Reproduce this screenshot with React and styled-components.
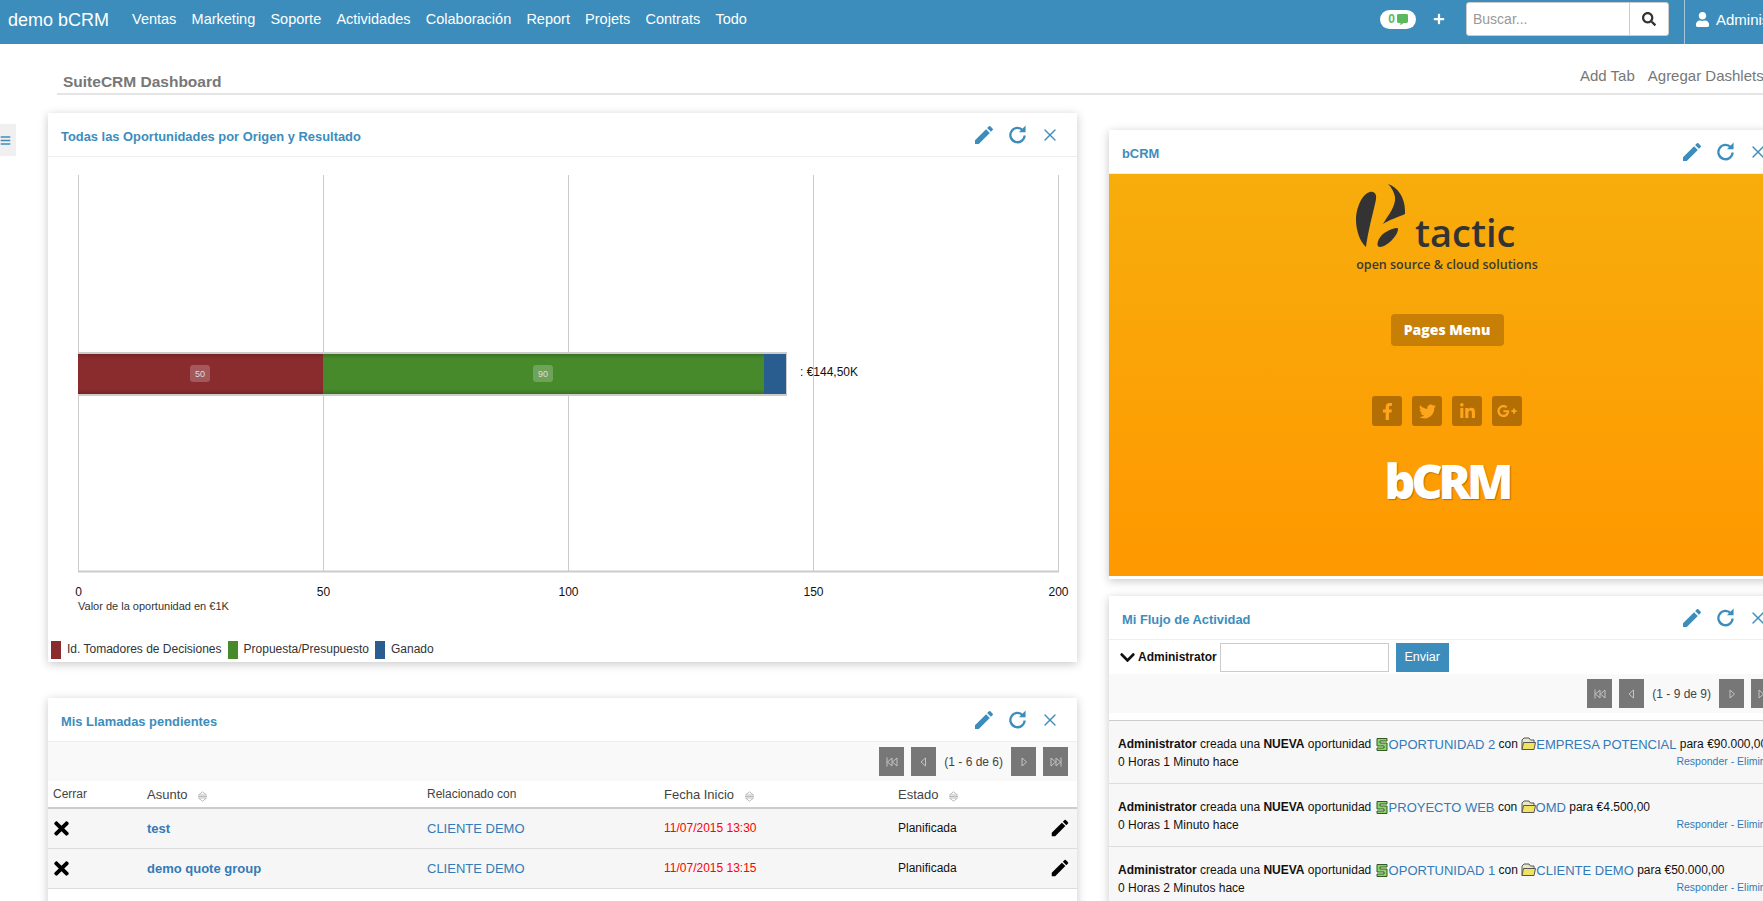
import React from "react";
import styled, { createGlobalStyle } from "styled-components";
import { MdEdit } from "react-icons/md";
import {
  FaChevronDown, FaCommentAlt, FaFacebookF, FaGooglePlusG, FaLinkedinIn, FaPlus,
  FaSearch, FaTimes, FaTwitter, FaUser, FaBars,
} from "react-icons/fa";
import { X } from "lucide-react";

const BLUE = "#3c8dbc";
const LINK = "#337ab7";
const RED = "#8a2b2e";
const GREEN = "#468a2b";
const NAVY = "#2a5d8f";

const GlobalStyle = createGlobalStyle`
  html, body { margin: 0; height: 100%; background: #fff; overflow: hidden; }
  body { font-family: "Liberation Sans", Arial, sans-serif; color: #333; }
  * { box-sizing: border-box; }
`;

const Page = styled.div`
  width: 100vw;
  height: 100vh;
  overflow: hidden;
`;

const Navbar = styled.header`
  display: flex;
  align-items: center;
  height: 44px;
  background: ${BLUE};
  color: #fff;
`;
const Brand = styled.div`
  flex: none;
  margin: -3px 0 0 8px;
  font-size: 18px;
`;
const Menu = styled.nav`
  display: flex;
  gap: 15.2px;
  margin: -6px 0 0 23px;
  font-size: 14.5px;
`;
const NavTools = styled.div`
  display: flex;
  align-items: center;
  flex: none;
  width: 383px;
  height: 44px;
  margin-left: auto;
  overflow: hidden;
`;
const Badge = styled.div`
  display: flex;
  align-items: center;
  justify-content: center;
  flex: none;
  gap: 2px;
  width: 36px;
  height: 19px;
  margin-top: -6px;
  border-radius: 10px;
  background: #fff;
  color: #5cb85c;
  font-size: 12px;
  font-weight: 700;
`;
const PlusWrap = styled.div`
  display: flex;
  flex: none;
  margin: -6px 21px 0 17px;
  font-size: 12px;
`;
const Search = styled.div`
  display: flex;
  flex: none;
  width: 203px;
  height: 34px;
  margin-top: -6px;
  border: 1px solid #ccc;
  border-radius: 3px;
  background: #fff;
`;
const SearchText = styled.div`
  flex: 1;
  padding-left: 6px;
  color: #999;
  font-size: 14px;
  line-height: 32px;
`;
const SearchButton = styled.div`
  display: flex;
  align-items: center;
  justify-content: center;
  width: 39px;
  border-left: 1px solid #ccc;
  color: #333;
  font-size: 14px;
`;
const UserBox = styled.div`
  display: flex;
  align-items: center;
  flex: none;
  gap: 6px;
  height: 44px;
  margin-left: 15px;
  padding: 0 0 6px 10px;
  border-left: 1px solid #a5c6da;
  font-size: 15px;
  white-space: nowrap;
`;

const TabBar = styled.div`
  display: flex;
  justify-content: space-between;
  height: 51px;
  margin-left: 57px;
  border-bottom: 2px solid #e5e5e5;
  color: #777;
  white-space: nowrap;
`;
const DashTitle = styled.div`
  margin: 28px 0 0 6px;
  font-size: 15.5px;
  font-weight: 700;
  line-height: 20px;
`;
const TabActions = styled.div`
  display: flex;
  flex: none;
  gap: 13px;
  width: 183px;
  margin-top: 23px;
  font-size: 15px;
  line-height: 18px;
`;

const Main = styled.main`
  display: grid;
  grid-template-columns: 48px 1029px 708px;
`;
const SideToggle = styled.div`
  display: flex;
  align-items: center;
  width: 16px;
  height: 32px;
  margin-top: 29px;
  background: #f0f0f0;
  color: ${BLUE};
  font-size: 11px;
`;
const LeftColumn = styled.div`
  display: flex;
  flex-direction: column;
  gap: 36px;
  padding-top: 18px;
`;
const RightColumn = styled.div`
  display: flex;
  flex-direction: column;
  gap: 17px;
  margin-left: 32px;
  padding-top: 35px;
`;

const Panel = styled.section`
  padding-bottom: ${(p) => p.$tail || 0}px;
  background: #fff;
  box-shadow: 0 2px 9px rgba(0, 0, 0, 0.22);
`;
const PanelHead = styled.div`
  display: flex;
  align-items: center;
  justify-content: space-between;
  height: 44px;
  padding: 0 17px 0 13px;
  border-bottom: 1px solid #eee;
`;
const PanelTitle = styled.h3`
  margin: 3px 0 0;
  color: ${BLUE};
  font-size: 12.9px;
  font-weight: 700;
`;
const PanelIcons = styled.div`
  display: flex;
  align-items: center;
  color: ${BLUE};
`;
const HeadIcon = styled.span`
  display: flex;
  justify-content: center;
  width: ${(p) => p.$w}px;
  margin-left: ${(p) => p.$gap || 0}px;
`;

const ChartSvg = styled.svg`
  display: block;
  font-family: "Liberation Sans", Arial, sans-serif;
`;
const Legend = styled.div`
  display: flex;
  align-items: center;
  height: 21px;
  padding: 0 0 3px 3px;
  color: #333;
  font-size: 12px;
`;
const Swatch = styled.span`
  width: 10px;
  height: 18px;
  margin-right: 6px;
  background: ${(p) => p.$color};
`;
const LegendLabel = styled.span`
  margin: -3px 6px 0 0;
`;

const PagerBar = styled.div`
  display: flex;
  align-items: center;
  justify-content: flex-end;
  gap: 7px;
  height: 39px;
  padding-right: 9px;
  background: #f9f9f9;
`;
const PagerButton = styled.div`
  display: flex;
  align-items: center;
  justify-content: center;
  width: 25px;
  height: 29px;
  background: #777;
`;
const PagerText = styled.span`
  margin: 0 1px;
  color: #444;
  font-size: 12px;
`;

const Table = styled.table`
  width: 100%;
  border-collapse: collapse;
  table-layout: fixed;
`;
const HeadCell = styled.th`
  width: ${(p) => p.$w}px;
  height: 27px;
  padding: 0 0 0 5px;
  border-bottom: 2px solid #ccc;
  color: #444;
  font-size: ${(p) => p.$size || 13}px;
  font-weight: 400;
  text-align: left;
`;
const SortMark = styled.svg`
  margin-left: 11px;
  vertical-align: -3px;
`;
const Row = styled.tr`
  background: #f6f6f6;
`;
const Cell = styled.td`
  height: 40px;
  padding: 0 0 0 5px;
  border-bottom: 1px solid #ddd;
  color: ${(p) => p.$color || "#111"};
  font-size: ${(p) => p.$size || 12}px;
  font-weight: ${(p) => p.$weight || 400};
`;
const ActionIcon = styled.span`
  display: flex;
  align-items: center;
  margin-left: ${(p) => p.$shift || 0}px;
  font-size: ${(p) => p.$size}px;
  color: #000;
`;

const Promo = styled.div`
  display: flex;
  flex-direction: column;
  align-items: center;
  height: 402px;
  margin-bottom: 3px;
  padding-top: 10px;
  background: linear-gradient(#f7ad0c, #ff9800);
`;
const LogoRow = styled.div`
  display: flex;
  align-items: flex-end;
  gap: 10px;
  width: 182px;
  height: 63px;
`;
const LogoWord = styled.span`
  color: #333;
  font-family: "Open Sans", sans-serif;
  font-size: 38px;
  font-weight: 600;
  line-height: 39px;
  position: relative;
  top: 5px;
`;
const Tagline = styled.div`
  margin-top: 9px;
  color: #3a3a32;
  font-family: "Open Sans", sans-serif;
  font-size: 12.5px;
  font-weight: 600;
  line-height: 18px;
`;
const PagesButton = styled.div`
  width: 113px;
  height: 32px;
  margin-top: 40px;
  border-radius: 4px;
  background: #c87f06;
  color: #fff;
  font-family: "Open Sans", sans-serif;
  font-size: 14px;
  font-weight: 800;
  line-height: 32px;
  text-align: center;
`;
const Socials = styled.div`
  display: flex;
  gap: 10px;
  margin-top: 50px;
`;
const Social = styled.div`
  display: flex;
  align-items: center;
  justify-content: center;
  width: 30px;
  height: 30px;
  border-radius: 3px;
  background: #b36f04;
  color: #ffa51c;
  font-size: 17px;
`;
const BigWord = styled.div`
  margin-top: 30px;
  color: #fff;
  font-family: "Open Sans", sans-serif;
  font-size: 48px;
  font-weight: 800;
  letter-spacing: -4px;
  line-height: 50px;
  text-shadow: 1px 1px 1px rgba(120, 70, 0, 0.5);
`;

const PostBar = styled.div`
  display: flex;
  align-items: center;
  height: 34px;
  padding-left: 10px;
  color: #111;
  font-size: 12px;
  font-weight: 700;
`;
const PostLabel = styled.span`
  margin-left: 2px;
`;
const PostInput = styled.div`
  width: 169px;
  height: 29px;
  margin-left: 3px;
  border: 1px solid #ccc;
`;
const PostButton = styled.div`
  width: 53px;
  height: 29px;
  margin-left: 7px;
  background: ${BLUE};
  color: #fff;
  font-size: 12.5px;
  font-weight: 400;
  line-height: 29px;
  text-align: center;
`;
const Feed = styled.div`
  margin-top: 7px;
  border-top: 1px solid #ccc;
`;
const FeedRow = styled.div`
  height: 63px;
  padding: 14px 10px 0 9px;
  border-bottom: 1px solid #ddd;
  background: #f7f7f7;
  color: #111;
  font-size: 12px;
`;
const FeedLine = styled.div`
  display: flex;
  align-items: center;
  height: 18px;
  white-space: pre;
`;
const FeedMeta = styled.div`
  display: flex;
  justify-content: space-between;
  align-items: center;
  height: 18px;
`;
const FeedLink = styled.a`
  color: ${LINK};
  font-size: 13px;
`;
const FeedActions = styled.span`
  margin-top: -2px;
  color: ${LINK};
  font-size: 10.5px;
  white-space: nowrap;
`;
const InlineIcon = styled.svg`
  flex: none;
`;

function RepeatIcon() {
  return (
    <svg width="19" height="19" viewBox="0 0 20 20" fill="none" stroke="currentColor" strokeWidth="2.4">
      <path d="M15.500 5.500A7.500 7.500 0 1 0 17.500 11" />
      <path d="M11.500 7.500H18.500V0.500Z" fill="currentColor" stroke="none" />
    </svg>
  );
}

function HeadTools() {
  return (
    <PanelIcons>
      <HeadIcon $w={24}><MdEdit size={26} /></HeadIcon>
      <HeadIcon $w={20} $gap={11}><RepeatIcon /></HeadIcon>
      <HeadIcon $w={20} $gap={13}><X size={24} strokeWidth={1.6} /></HeadIcon>
    </PanelIcons>
  );
}

function PagerIcon({ kind }) {
  const tri = {
    first: "M6 1 1.500 5 6 9ZM11 1 6.500 5 11 9Z",
    prev: "M7.500 1 3 5 7.500 9Z",
    next: "M4 1 8.500 5 4 9Z",
    last: "M1 1 5.500 5 1 9ZM6 1 10.500 5 6 9Z",
  }[kind];
  return (
    <svg width="12" height="10" viewBox="0 0 12 10" fill="none" stroke="#c4c4c4">
      <path d={tri} />
      {kind === "first" && <path d="M1 0.500V9.500" />}
      {kind === "last" && <path d="M11 0.500V9.500" />}
    </svg>
  );
}

function Pager({ text }) {
  return (
    <PagerBar>
      <PagerButton><PagerIcon kind="first" /></PagerButton>
      <PagerButton><PagerIcon kind="prev" /></PagerButton>
      <PagerText>{text}</PagerText>
      <PagerButton><PagerIcon kind="next" /></PagerButton>
      <PagerButton><PagerIcon kind="last" /></PagerButton>
    </PagerBar>
  );
}

function Sort() {
  return (
    <SortMark width="9" height="11" viewBox="0 0 9 11" fill="none" stroke="#aaa" strokeWidth="0.8">
      <path d="M0.500 4 4.500 0.800 8.500 4ZM0 5.500H9M0.500 7 4.500 10.200 8.500 7Z" />
    </SortMark>
  );
}

function Chart() {
  const grid = [30.5, 275.5, 520.5, 765.5, 1010.5];
  const labels = ["0", "50", "100", "150", "200"];
  return (
    <ChartSvg width="1029" height="484" viewBox="0 -1 1029 484">
      <defs>
        <linearGradient id="redBar" x1="0" y1="0" x2="0" y2="1">
          <stop offset="0" stopColor="#742426" />
          <stop offset="0.12" stopColor={RED} />
          <stop offset="0.88" stopColor={RED} />
          <stop offset="1" stopColor="#742426" />
        </linearGradient>
        <linearGradient id="greenBar" x1="0" y1="0" x2="0" y2="1">
          <stop offset="0" stopColor="#3a7225" />
          <stop offset="0.12" stopColor={GREEN} />
          <stop offset="0.88" stopColor={GREEN} />
          <stop offset="1" stopColor="#3a7225" />
        </linearGradient>
      </defs>
      {grid.map((x) => (
        <line key={x} x1={x} x2={x} y1="17" y2="414" stroke="#ccc" />
      ))}
      <line x1="30" x2="1011" y1="413.500" y2="413.500" stroke="#ccc" strokeWidth="2" />
      <rect x="30" y="194" width="709" height="44" fill="#ccc" />
      <rect x="30" y="196" width="245" height="40" fill="url(#redBar)" />
      <rect x="275" y="196" width="441" height="40" fill="url(#greenBar)" />
      <rect x="716" y="196" width="22" height="40" fill={NAVY} />
      <rect x="142" y="207" width="20" height="17" rx="3" fill="#fff" fillOpacity="0.22" />
      <text x="152" y="219" fontSize="9" fill="#ddd" textAnchor="middle">50</text>
      <rect x="485" y="207" width="20" height="17" rx="3" fill="#fff" fillOpacity="0.22" />
      <text x="495" y="219" fontSize="9" fill="#ddd" textAnchor="middle">90</text>
      <text x="752" y="218" fontSize="12" fill="#111">: €144,50K</text>
      {grid.map((x, i) => (
        <text key={labels[i]} x={x} y="438" fontSize="12" fill="#111" textAnchor="middle">{labels[i]}</text>
      ))}
      <text x="30" y="452" fontSize="11" fill="#333">Valor de la oportunidad en €1K</text>
    </ChartSvg>
  );
}

const calls = [
  { subject: "test", date: "11/07/2015 13:30" },
  { subject: "demo quote group", date: "11/07/2015 13:15" },
];

const feed = [
  { opp: "OPORTUNIDAD 2", account: "EMPRESA POTENCIAL", amount: "€90.000,00", ago: "0 Horas 1 Minuto hace" },
  { opp: "PROYECTO WEB", account: "OMD", amount: "€4.500,00", ago: "0 Horas 1 Minuto hace" },
  { opp: "OPORTUNIDAD 1", account: "CLIENTE DEMO", amount: "€50.000,00", ago: "0 Horas 2 Minutos hace" },
];

function CoinIcon() {
  return (
    <InlineIcon width="14" height="15" viewBox="0 0 14 15">
      <path d="M2 1.500H12V4H5V6H12V13.500H2V11H9V9H2Z" fill="#8fd16b" stroke="#2f5d22" />
    </InlineIcon>
  );
}

function FolderIcon() {
  return (
    <InlineIcon width="15" height="14" viewBox="0 0 15 14">
      <path d="M1 12.500V3L3 1H8L9.500 3H13V5" fill="#e8e8c8" stroke="#555" />
      <path d="M1 12.500 2.500 5.500H14.500L13 12.500Z" fill="#f2e35f" stroke="#555" />
    </InlineIcon>
  );
}

export default function App() {
  return (
    <Page>
      <GlobalStyle />
      <Navbar>
        <Brand>demo bCRM</Brand>
        <Menu>
          {["Ventas", "Marketing", "Soporte", "Actividades", "Colaboración", "Report", "Projets", "Contrats", "Todo"].map((item) => (
            <span key={item}>{item}</span>
          ))}
        </Menu>
        <NavTools>
          <Badge>0 <FaCommentAlt size={11} /></Badge>
          <PlusWrap><FaPlus /></PlusWrap>
          <Search>
            <SearchText>Buscar...</SearchText>
            <SearchButton><FaSearch /></SearchButton>
          </Search>
          <UserBox><FaUser size={15} />Administrator</UserBox>
        </NavTools>
      </Navbar>

      <TabBar>
        <DashTitle>SuiteCRM Dashboard</DashTitle>
        <TabActions>
          <span>Add Tab</span>
          <span>Agregar Dashlets</span>
        </TabActions>
      </TabBar>

      <Main>
        <SideToggle><FaBars /></SideToggle>
        <LeftColumn>
          <Panel>
            <PanelHead>
              <PanelTitle>Todas las Oportunidades por Origen y Resultado</PanelTitle>
              <HeadTools />
            </PanelHead>
            <Chart />
            <Legend>
              <Swatch $color={RED} /><LegendLabel>Id. Tomadores de Decisiones</LegendLabel>
              <Swatch $color={GREEN} /><LegendLabel>Propuesta/Presupuesto</LegendLabel>
              <Swatch $color={NAVY} /><LegendLabel>Ganado</LegendLabel>
            </Legend>
          </Panel>

          <Panel $tail={40}>
            <PanelHead>
              <PanelTitle>Mis Llamadas pendientes</PanelTitle>
              <HeadTools />
            </PanelHead>
            <Pager text="(1 - 6 de 6)" />
            <Table>
              <thead>
                <tr>
                  <HeadCell $w={94} $size={12}>Cerrar</HeadCell>
                  <HeadCell $w={280}>Asunto<Sort /></HeadCell>
                  <HeadCell $w={237} $size={12}>Relacionado con</HeadCell>
                  <HeadCell $w={234}>Fecha Inicio<Sort /></HeadCell>
                  <HeadCell $w={150}>Estado<Sort /></HeadCell>
                  <HeadCell $w={34} />
                </tr>
              </thead>
              <tbody>
                {calls.map((c) => (
                  <Row key={c.subject}>
                    <Cell><ActionIcon $size={21} $shift={-2}><FaTimes /></ActionIcon></Cell>
                    <Cell $color={LINK} $size={13} $weight={700}>{c.subject}</Cell>
                    <Cell $color={LINK} $size={13}>CLIENTE DEMO</Cell>
                    <Cell $color="#f00">{c.date}</Cell>
                    <Cell>Planificada</Cell>
                    <Cell><ActionIcon $size={22} $shift={1}><MdEdit /></ActionIcon></Cell>
                  </Row>
                ))}
              </tbody>
            </Table>
          </Panel>
        </LeftColumn>

        <RightColumn>
          <Panel>
            <PanelHead>
              <PanelTitle>bCRM</PanelTitle>
              <HeadTools />
            </PanelHead>
            <Promo>
              <LogoRow>
                <svg width="49" height="63" viewBox="0 0 49 63" fill="#333">
                  <path d="M14 8C18 7 21 10 20 15C19 22 13 42 10 63C4 58 0 46 0 36C0 24 6 10 14 8Z" />
                  <path d="M32 0C42 3 49 14 49 27L49 30C42 33 33 36 27 40C33 30 40 22 39 13C38 8 36 4 32 0Z" />
                  <path d="M42 45C42 52 30 63 24 63C20 63 21 57 25 52C29 47 42 42 42 45Z" />
                </svg>
                <LogoWord>tactic</LogoWord>
              </LogoRow>
              <Tagline>open source &amp; cloud solutions</Tagline>
              <PagesButton>Pages Menu</PagesButton>
              <Socials>
                <Social><FaFacebookF /></Social>
                <Social><FaTwitter /></Social>
                <Social><FaLinkedinIn /></Social>
                <Social><FaGooglePlusG size={20} /></Social>
              </Socials>
              <BigWord>bCRM</BigWord>
            </Promo>
          </Panel>

          <Panel>
            <PanelHead>
              <PanelTitle>Mi Flujo de Actividad</PanelTitle>
              <HeadTools />
            </PanelHead>
            <PostBar>
              <FaChevronDown size={17} />
              <PostLabel>Administrator</PostLabel>
              <PostInput />
              <PostButton>Enviar</PostButton>
            </PostBar>
            <Pager text="(1 - 9 de 9)" />
            <Feed>
              {feed.map((f) => (
                <FeedRow key={f.opp}>
                  <FeedLine>
                    <b>Administrator</b> creada una <b>NUEVA</b> oportunidad <CoinIcon />
                    <FeedLink>{f.opp}</FeedLink> con <FolderIcon />
                    <FeedLink>{f.account}</FeedLink> para {f.amount}
                  </FeedLine>
                  <FeedMeta>
                    <span>{f.ago}</span>
                    <FeedActions>Responder - Eliminar</FeedActions>
                  </FeedMeta>
                </FeedRow>
              ))}
            </Feed>
          </Panel>
        </RightColumn>
      </Main>
    </Page>
  );
}
